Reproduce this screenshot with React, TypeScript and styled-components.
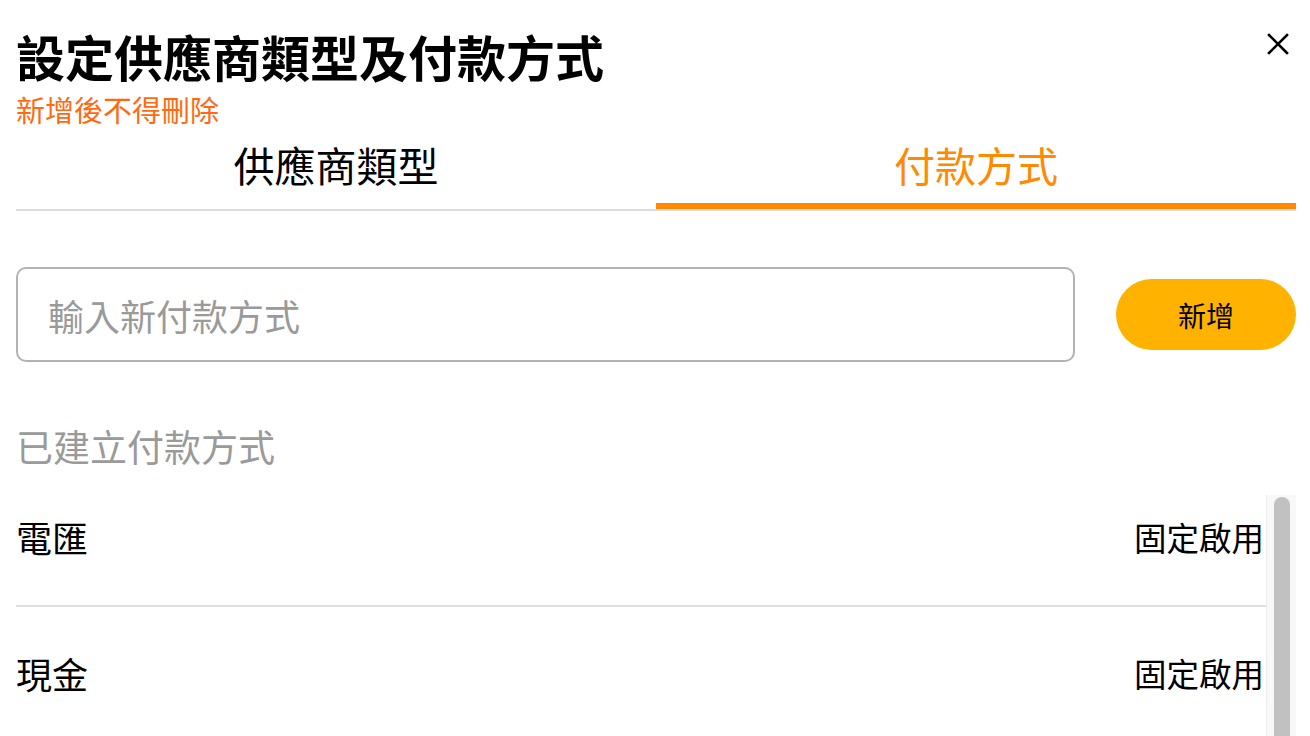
import React from "react";
import styled, { createGlobalStyle } from "styled-components";

const GlobalStyle = createGlobalStyle`
  html, body {
    margin: 0;
    padding: 0;
    overflow: hidden;
    background: #ffffff;
  }

  *,
  *::before,
  *::after {
    box-sizing: border-box;
  }

  body {
    font-family: "Noto Sans CJK TC", "Noto Sans", sans-serif;
    color: #000000;
    -webkit-font-smoothing: antialiased;
  }
`;

const Page = styled.div`
  padding: 28px 14px 0 16px;
`;

const Header = styled.header`
  display: flex;
  justify-content: space-between;
  align-items: flex-start;
`;

const Title = styled.h1`
  margin: 0;
  font-size: 49px;
  line-height: 56px;
  font-weight: 700;
  color: #000000;
`;

const Subtitle = styled.p`
  margin: 7px 0 0;
  font-size: 29px;
  line-height: 36px;
  color: #ff6a10;
`;

const CloseButton = styled.button`
  margin: 4px 6px 0 0;
  padding: 0;
  border: none;
  background: transparent;
  width: 24px;
  height: 24px;
  cursor: pointer;
  color: #000000;

  svg {
    display: block;
  }
`;

const Tabs = styled.nav`
  display: flex;
  margin-top: 13px;
  border-bottom: 2px solid #dddddd;
`;

const Tab = styled.button<{ $active?: boolean }>`
  flex: 1;
  padding: 0 0 15px;
  border: none;
  border-bottom: 6px solid ${(p) => (p.$active ? "#ff8a00" : "transparent")};
  background: transparent;
  font-family: inherit;
  font-size: 41px;
  line-height: 48px;
  color: ${(p) => (p.$active ? "#ff8a00" : "#000000")};
  cursor: pointer;
`;

const AddRow = styled.div`
  display: flex;
  align-items: center;
  gap: 41px;
  margin-top: 56px;
`;

const Input = styled.input`
  flex: 1;
  height: 95px;
  padding: 0 30px;
  border: 2px solid #b3b3b3;
  border-radius: 10px;
  font-family: inherit;
  font-size: 36px;
  color: #000000;
  outline: none;

  &::placeholder {
    color: #9a9a9a;
  }
`;

const AddButton = styled.button`
  width: 180px;
  height: 71px;
  border: none;
  border-radius: 36px;
  background: #ffb300;
  font-family: inherit;
  font-size: 28px;
  color: #000000;
  cursor: pointer;
`;

const SectionLabel = styled.h2`
  margin: 60px 0 0;
  font-size: 37px;
  line-height: 48px;
  font-weight: 400;
  color: #9a9a9a;
`;

const ListFrame = styled.div`
  display: flex;
  margin-top: 25px;
  height: 420px;
  overflow: hidden;
`;

const List = styled.ul`
  flex: 1;
  margin: 1px 0 0;
  padding: 0;
  list-style: none;
`;

const ScrollTrack = styled.div`
  width: 30px;
  background: #f8f8f8;
  border-left: 1px solid #ececec;
`;

const ScrollThumb = styled.div`
  height: 380px;
  margin: 2px 6px 0 7px;
  border-radius: 8px;
  background: #c1c1c1;
`;

const Row = styled.li`
  display: flex;
  justify-content: space-between;
  align-items: center;
  padding: 42px 2px 44px 0;
  border-bottom: 2px solid #e0e0e0;

  &:first-child {
    padding-top: 17px;
  }
`;

const RowName = styled.span`
  font-size: 36px;
  line-height: 48px;
`;

const RowStatus = styled.span`
  font-size: 32.5px;
  line-height: 48px;
`;

const methods = ["電匯", "現金"];

export default function App() {
  return (
    <>
      <GlobalStyle />
      <Page>
        <Header>
          <div>
            <Title>設定供應商類型及付款方式</Title>
            <Subtitle>新增後不得刪除</Subtitle>
          </div>
          <CloseButton aria-label="close">
            <svg width="24" height="24" viewBox="0 0 24 24">
              <path
                d="M3 3 L21 21 M21 3 L3 21"
                stroke="currentColor"
                strokeWidth="2.6"
                strokeLinecap="square"
                fill="none"
              />
            </svg>
          </CloseButton>
        </Header>

        <Tabs>
          <Tab>供應商類型</Tab>
          <Tab $active>付款方式</Tab>
        </Tabs>

        <AddRow>
          <Input placeholder="輸入新付款方式" />
          <AddButton>新增</AddButton>
        </AddRow>

        <SectionLabel>已建立付款方式</SectionLabel>

        <ListFrame>
          <List>
            {methods.map((m) => (
              <Row key={m}>
                <RowName>{m}</RowName>
                <RowStatus>固定啟用</RowStatus>
              </Row>
            ))}
          </List>
          <ScrollTrack>
            <ScrollThumb />
          </ScrollTrack>
        </ListFrame>
      </Page>
    </>
  );
}
